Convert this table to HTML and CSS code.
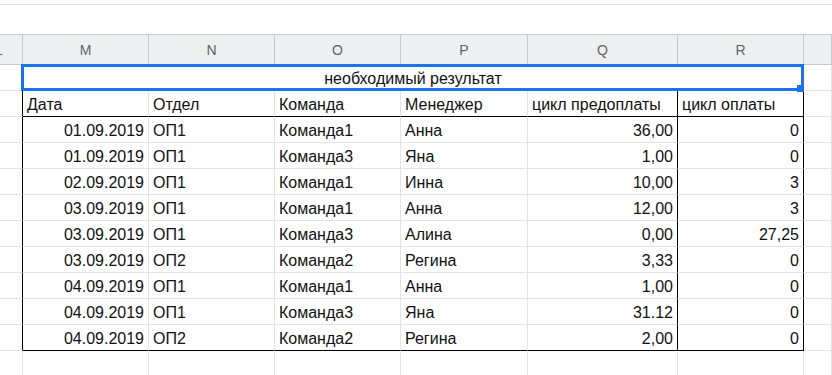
FILE: index.html
```html
<!DOCTYPE html>
<html lang="ru">
<head>
<meta charset="utf-8">
<title>Таблица</title>
<link rel="stylesheet" href="styles.css">
</head>
<body>
<div class="top"></div>
<div class="sheet">
  <div class="c hd stub"><span class="lcut">L</span></div>
  <div class="c hd">M</div>
  <div class="c hd">N</div>
  <div class="c hd">O</div>
  <div class="c hd">P</div>
  <div class="c hd">Q</div>
  <div class="c hd">R</div>
  <div class="c hd"></div>

  <div class="c stub"></div>
  <div class="c title">необходимый результат</div>
  <div class="c"></div>

  <div class="c stub bx"></div>
  <div class="c hrow">Дата</div>
  <div class="c hrow">Отдел</div>
  <div class="c hrow">Команда</div>
  <div class="c hrow">Менеджер</div>
  <div class="c hrow q">цикл предоплаты</div>
  <div class="c hrow q">цикл оплаты</div>
  <div class="c"></div>

  <div class="c stub bx"></div>
  <div class="c num">01.09.2019</div><div class="c">ОП1</div><div class="c">Команда1</div><div class="c">Анна</div><div class="c num q">36,00</div><div class="c num q">0</div>
  <div class="c"></div>

  <div class="c stub bx"></div>
  <div class="c num">01.09.2019</div><div class="c">ОП1</div><div class="c">Команда3</div><div class="c">Яна</div><div class="c num q">1,00</div><div class="c num q">0</div>
  <div class="c"></div>

  <div class="c stub bx"></div>
  <div class="c num">02.09.2019</div><div class="c">ОП1</div><div class="c">Команда1</div><div class="c">Инна</div><div class="c num q">10,00</div><div class="c num q">3</div>
  <div class="c"></div>

  <div class="c stub bx"></div>
  <div class="c num">03.09.2019</div><div class="c">ОП1</div><div class="c">Команда1</div><div class="c">Анна</div><div class="c num q">12,00</div><div class="c num q">3</div>
  <div class="c"></div>

  <div class="c stub bx"></div>
  <div class="c num">03.09.2019</div><div class="c">ОП1</div><div class="c">Команда3</div><div class="c">Алина</div><div class="c num q">0,00</div><div class="c num q">27,25</div>
  <div class="c"></div>

  <div class="c stub bx"></div>
  <div class="c num">03.09.2019</div><div class="c">ОП2</div><div class="c">Команда2</div><div class="c">Регина</div><div class="c num q">3,33</div><div class="c num q">0</div>
  <div class="c"></div>

  <div class="c stub bx"></div>
  <div class="c num">04.09.2019</div><div class="c">ОП1</div><div class="c">Команда1</div><div class="c">Анна</div><div class="c num q">1,00</div><div class="c num q">0</div>
  <div class="c"></div>

  <div class="c stub bx"></div>
  <div class="c num">04.09.2019</div><div class="c">ОП1</div><div class="c">Команда3</div><div class="c">Яна</div><div class="c num q">31.12</div><div class="c num q">0</div>
  <div class="c"></div>

  <div class="c stub bx"></div>
  <div class="c num last">04.09.2019</div><div class="c last">ОП2</div><div class="c last">Команда2</div><div class="c last">Регина</div><div class="c num q last">2,00</div><div class="c num q last">0</div>
  <div class="c"></div>

  <div class="c stub"></div>
  <div class="c"></div><div class="c"></div><div class="c"></div><div class="c"></div><div class="c"></div><div class="c"></div>
  <div class="c"></div>

  <div class="sel"></div>
  <div class="handle"></div>
</div>
</body>
</html>
```
FILE: styles.css
```css
html, body {
  margin: 0;
  padding: 0;
  background: #ffffff;
  overflow: hidden;
}
body {
  width: 832px;
  height: 375px;
  font-family: "Liberation Sans", Arial, sans-serif;
  color: #111111;
}
.top {
  margin-top: 4px;
  height: 29px;
  border-top: 1px solid #e3e3e3;
}
.sheet {
  position: relative;
  display: grid;
  grid-template-columns: 23px 126px 126px 126px 127px 150px 126px 1fr;
  grid-template-rows: 30px repeat(12, 26px);
  border-top: 1px solid #c6c8cb;
}
.c {
  box-sizing: border-box;
  border-right: 1px solid #e2e3e3;
  border-bottom: 1px solid #e2e3e3;
  font-size: 16px;
  line-height: 18px;
  padding: 0 4px 2px 4px;
  display: flex;
  align-items: flex-end;
  white-space: nowrap;
  overflow: hidden;
}
.hd {
  background: #eeeff1;
  border-right-color: #c6c8cb;
  border-bottom-color: #c6c8cb;
  color: #5f6368;
  font-size: 14px;
  justify-content: center;
  align-items: center;
  padding: 0;
}
.stub {
  padding: 0;
}
.hd.stub {
  justify-content: flex-start;
}
.lcut {
  margin-left: -5px;
}
.title {
  grid-column: span 6;
  justify-content: center;
}
.num {
  justify-content: flex-end;
}
.bx {
  border-right-color: #000000;
}
.hrow {
  border-bottom-color: #000000;
}
.q {
  border-right-color: #000000;
}
.last {
  border-bottom-color: #000000;
}
.sel {
  position: absolute;
  left: 21px;
  top: 29px;
  width: 783px;
  height: 27px;
  box-sizing: border-box;
  border: 3px solid #1a73e8;
}
.handle {
  position: absolute;
  left: 797px;
  top: 50px;
  width: 7px;
  height: 7px;
  background: #1a73e8;
}
```
